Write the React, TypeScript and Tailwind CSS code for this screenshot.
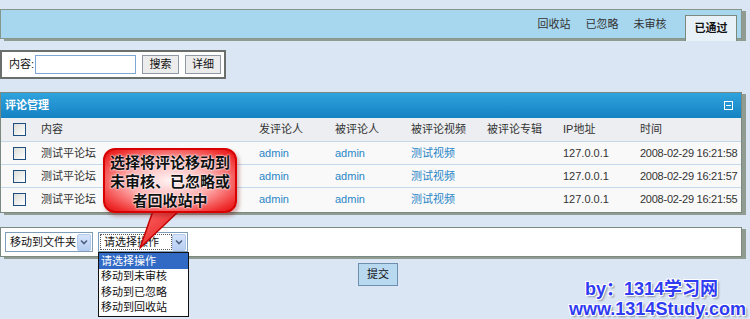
const tabs = ['回收站', '已忽略', '未审核']

const rows = [
  { title: '测试平论坛', time: '2008-02-29 16:21:58' },
  { title: '测试平论坛', time: '2008-02-29 16:21:57' },
  { title: '测试平论坛', time: '2008-02-29 16:21:55' },
]

const actions = ['请选择操作', '移动到未审核', '移动到已忽略', '移动到回收站']

const cols = 'grid grid-cols-[40px_218px_76px_76px_76px_76px_77px_1fr] items-center'

function CheckBox() {
  return (
    <span className="ml-[12px] block w-[13px] h-[13px] border border-[#1f4f82] bg-gradient-to-br from-[#dcdcd7] to-[#ffffff]"></span>
  )
}

function Arrow() {
  return (
    <span className="flex items-center justify-center w-[14px] h-[17px] bg-gradient-to-b from-[#d6e4fa] to-[#b6cdf2] border border-[#b2c8ec] rounded-[2px]">
      <svg width="8" height="6" viewBox="0 0 8 6">
        <path d="M1 1.5 L4 4.5 L7 1.5" fill="none" stroke="#4d6185" strokeWidth={1.6} />
      </svg>
    </span>
  )
}

export default function App() {
  return (
    <div className="relative w-[750px] h-[319px] overflow-hidden bg-[#dae6f3] text-[11px] text-[#333] font-['Liberation_Sans','Noto_Sans_CJK_SC',sans-serif]">
      <div className="pt-[9px]">
        {/* Tabs */}
        <div className="flex items-end justify-end h-[30px] w-[742px] bg-[#a7d7ef] border border-[#87968a] shadow-[4px_2px_0_#909c92] pr-[4px]">
          {tabs.map((t) => (
            <div key={t} className="w-[48px] h-full flex items-center justify-center text-[#333]">
              {t}
            </div>
          ))}
          <div className="ml-[11px] w-[52px] h-[26px] -mb-[3px] flex items-center justify-center bg-[#e9f1f8] border border-b-0 border-[#7c8a7e] font-bold text-[#111]">
            已通过
          </div>
        </div>

        {/* Search */}
        <div className="mt-[11px] w-[226px] h-[29px] flex items-center bg-white border-2 border-[#6b6f6b] pl-[7px] text-[#111]">
          <span>内容:</span>
          <span className="ml-[1px] w-[101px] h-[19px] border border-[#7ea7d6] bg-white"></span>
          <button className="ml-[6px] w-[37px] h-[19px] border border-[#8f9aa6] bg-[#ececec] text-[11px] text-[#111]">搜索</button>
          <button className="ml-[6px] w-[36px] h-[19px] border border-[#8f9aa6] bg-[#ececec] text-[11px] text-[#111]">详细</button>
        </div>

        {/* Panel */}
        <div className="mt-[13px] w-[742px] border border-[#7b8a80] shadow-[4px_2px_0_#909c92] bg-[#f9f9f9]">
          <div className="flex items-center justify-between h-[25px] px-[4px] bg-gradient-to-b from-[#2ea3de] to-[#1582c2] text-white font-bold">
            <span>评论管理</span>
            <span className="mr-[4px] flex items-center justify-center w-[9px] h-[9px] border border-white">
              <span className="block w-[5px] h-[1px] bg-white"></span>
            </span>
          </div>
          <div className={`${cols} h-[24px] bg-[#eceef1] border-b border-[#c5d9eb]`}>
            <CheckBox />
            <span>内容</span>
            <span>发评论人</span>
            <span>被评论人</span>
            <span>被评论视频</span>
            <span>被评论专辑</span>
            <span>IP地址</span>
            <span>时间</span>
          </div>
          {rows.map((r, i) => (
            <div key={i} className={`${cols} h-[23px] ${i < rows.length - 1 ? 'border-b border-[#c5d9eb]' : ''}`}>
              <CheckBox />
              <span>{r.title}</span>
              <span className="text-[#2a86c6]">admin</span>
              <span className="text-[#2a86c6]">admin</span>
              <span className="text-[#2a86c6]">测试视频</span>
              <span></span>
              <span>127.0.0.1</span>
              <span className="whitespace-nowrap tracking-[-0.25px]">{r.time}</span>
            </div>
          ))}
          <div className="h-[1px]"></div>
        </div>

        {/* Action bar */}
        <div className="mt-[14px] w-[742px] h-[30px] flex items-center gap-[5px] pl-[4px] bg-white border border-[#7b8a80] shadow-[4px_2px_0_#909c92] text-[#111]">
          <div className="w-[88px] h-[20px] flex items-center justify-between border border-[#7f9db9] pl-[4px] pr-[1px]">
            <span>移动到文件夹</span>
            <Arrow />
          </div>
          <div className="w-[90px] h-[20px] flex items-center justify-between border border-[#7f9db9] pl-[1px] pr-[1px]">
            <span className="w-[73px] h-[16px] flex items-center pl-[3px] border border-dotted border-[#555]">请选择操作</span>
            <Arrow />
          </div>
        </div>

        {/* Submit */}
        <div className="mt-[6px] ml-[358px]">
          <button className="w-[40px] h-[23px] border border-[#6f8fae] bg-[#b9d9f1] text-[11px] text-[#111]">提交</button>
        </div>
      </div>

      {/* Open select list */}
      <div className="absolute left-[98px] top-[252px] w-[91px] h-[65px] bg-white border border-[#111] text-[#111]">
        {actions.map((a, i) => (
          <div key={a} className={`h-[15.5px] flex items-center pl-[2px] ${i === 0 ? 'bg-[#316ac5] text-white' : ''}`}>
            {a}
          </div>
        ))}
      </div>

      {/* Callout tail */}
      <svg className="absolute left-[130px] top-[200px]" width="70" height="52" viewBox="0 0 70 52">
        <defs>
          <linearGradient id="tail" x1="0" y1="0" x2="1" y2="1">
            <stop offset="0" stopColor="#ff6a6a" />
            <stop offset="1" stopColor="#e01010" />
          </linearGradient>
        </defs>
        <path d="M24 8 L52 8 L10 48 Z" fill="url(#tail)" stroke="#c40000" strokeWidth={1.5} strokeLinejoin="round" />
      </svg>

      {/* Callout bubble */}
      <div className="absolute left-[103px] top-[148px] w-[134px] h-[65px] rounded-[12px] border-2 border-[#d80000] bg-[radial-gradient(ellipse_at_center,#fff4f4_0%,#ffb0b0_45%,#f03030_85%,#e01010_100%)] shadow-[2px_3px_4px_rgba(120,0,0,0.35)] flex flex-col items-center justify-center text-[15px] leading-[19px] font-bold text-[#111] font-['Noto_Sans_CJK_SC',sans-serif] [text-shadow:0_0_2px_#fff,0_0_2px_#fff]">
        <span>选择将评论移动到</span>
        <span>未审核、已忽略或</span>
        <span>者回收站中</span>
      </div>

      {/* Watermark */}
      <div className="absolute left-[585px] top-[279px] text-[18px] leading-[20px] font-bold text-[#2f3cf2] font-['Liberation_Sans','Noto_Sans_CJK_SC',sans-serif] [text-shadow:1px_1px_0_#fff,-1px_-1px_0_#fff,1px_-1px_0_#fff,-1px_1px_0_#fff,2px_2px_2px_#8890a0] whitespace-nowrap">
        by：1314学习网
      </div>
      <div className="absolute left-[569px] top-[299px] text-[18px] leading-[20px] font-bold text-[#2f3cf2] font-['Liberation_Sans',sans-serif] [text-shadow:1px_1px_0_#fff,-1px_-1px_0_#fff,1px_-1px_0_#fff,-1px_1px_0_#fff,2px_2px_2px_#8890a0] whitespace-nowrap">
        www.1314Study.com
      </div>
    </div>
  )
}
